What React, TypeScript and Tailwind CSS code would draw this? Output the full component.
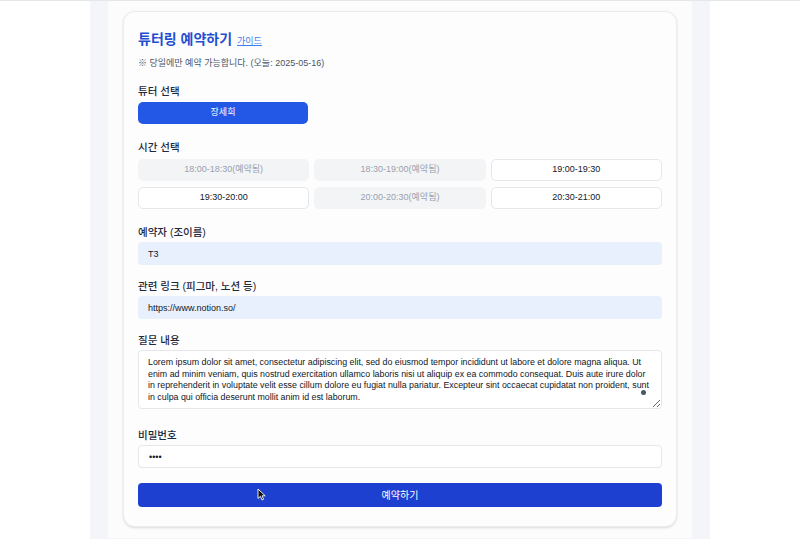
import React from 'react';

const slots = [
  { label: '18:00-18:30(예약됨)', booked: true },
  { label: '18:30-19:00(예약됨)', booked: true },
  { label: '19:00-19:30', booked: false },
  { label: '19:30-20:00', booked: false },
  { label: '20:00-20:30(예약됨)', booked: true },
  { label: '20:30-21:00', booked: false },
];

const lorem =
  'Lorem ipsum dolor sit amet, consectetur adipiscing elit, sed do eiusmod tempor incididunt ut labore et dolore magna aliqua. Ut enim ad minim veniam, quis nostrud exercitation ullamco laboris nisi ut aliquip ex ea commodo consequat. Duis aute irure dolor in reprehenderit in voluptate velit esse cillum dolore eu fugiat nulla pariatur. Excepteur sint occaecat cupidatat non proident, sunt in culpa qui officia deserunt mollit anim id est laborum.';

function Label({ children }: { children: React.ReactNode }) {
  return (
    <div className="h-[14px] mb-[3px] text-[10.5px] leading-[14px] font-medium text-gray-800">
      {children}
    </div>
  );
}

export default function App() {
  return (
    <div className="min-h-[541px] bg-white border-t border-gray-200 font-['Liberation_Sans','Noto_Sans_CJK_KR',sans-serif]">
      <div className="w-[620px] mx-auto bg-[#f3f5f8] px-[18px] h-[538px] border-b border-gray-100">
        <div className="bg-[#fcfcfd] h-full px-[15px] pt-[10px]">
          <div className="relative rounded-xl border border-gray-200/80 bg-[#fdfdfe] shadow-sm px-[14px] pt-[19px] pb-[19px]">
            {/* Header */}
            <div className="flex items-baseline gap-[5px] h-[16px]">
              <h1 className="text-[14px] leading-[16px] font-bold text-[#1f4fd1]">튜터링 예약하기</h1>
              <a className="text-[9px] text-[#3d7ef0] underline">가이드</a>
            </div>
            <p className="mt-[10px] h-[12px] text-[9px] leading-[12px] text-gray-600">
              ※ 당일에만 예약 가능합니다. (오늘: 2025-05-16)
            </p>

            {/* Tutor */}
            <div className="mt-[15px]">
              <Label>튜터 선택</Label>
              <button className="block mt-[4px] w-[170px] h-[22px] rounded-[5px] bg-[#2358e6] text-white text-[9px]">
                장세희
              </button>
            </div>

            {/* Time */}
            <div className="mt-[16px]">
              <Label>시간 선택</Label>
              <div className="grid grid-cols-3 gap-x-[5px] gap-y-[6px] mt-[5px]">
                {slots.map((s) => (
                  <div
                    key={s.label}
                    className={
                      s.booked
                        ? 'h-[22px] rounded-[5px] bg-gray-100 border border-gray-100 text-gray-400 text-[9px] flex items-center justify-center'
                        : 'h-[22px] rounded-[5px] bg-white border border-gray-200 text-gray-900 font-medium text-[9px] flex items-center justify-center'
                    }
                  >
                    {s.label}
                  </div>
                ))}
              </div>
            </div>

            {/* Name */}
            <div className="mt-[16px]">
              <Label>예약자 (조이름)</Label>
              <input
                readOnly
                value="T3"
                className="block w-full h-[23px] rounded-[4px] bg-[#e8f0fe] px-[10px] text-[9px] text-gray-900 outline-none"
              />
            </div>

            {/* Link */}
            <div className="mt-[14px]">
              <Label>관련 링크 (피그마, 노션 등)</Label>
              <input
                readOnly
                value="https://www.notion.so/"
                className="block w-full h-[23px] rounded-[4px] bg-[#e8f0fe] px-[10px] text-[9px] text-gray-900 outline-none"
              />
            </div>

            {/* Question */}
            <div className="mt-[14px] relative">
              <Label>질문 내용</Label>
              <textarea
                readOnly
                defaultValue={lorem}
                className="block w-full h-[59px] rounded-[4px] border border-gray-200 bg-white pl-[9px] pr-[8px] pt-[6px] text-[8.85px] leading-[11.7px] text-gray-900 outline-none"
              />
              <span className="absolute right-[16px] top-[57px] w-[5px] h-[5px] rounded-full bg-gray-600" />
            </div>

            {/* Password */}
            <div className="mt-[19px]">
              <Label>비밀번호</Label>
              <input
                readOnly
                type="password"
                value="1234"
                className="block w-full h-[23px] rounded-[4px] border border-gray-200 bg-white px-[10px] text-[9px] text-gray-900 outline-none"
              />
            </div>

            <div className="relative mt-[15px]">
              <button className="block w-full h-[24px] rounded-[4px] bg-[#1d40d0] text-white text-[10px]">
                예약하기
              </button>
              {/* mouse pointer */}
              <svg
                className="absolute left-[119px] top-[5px]"
                width="9"
                height="13"
                viewBox="0 0 9 13"
              >
                <path d="M1 1 L1 10.5 L3.4 8.3 L5 12 L6.6 11.3 L5 7.8 L8.2 7.8 Z" fill="#111" stroke="#fff" strokeWidth="0.9" />
              </svg>
            </div>
          </div>
        </div>
      </div>
    </div>
  );
}
